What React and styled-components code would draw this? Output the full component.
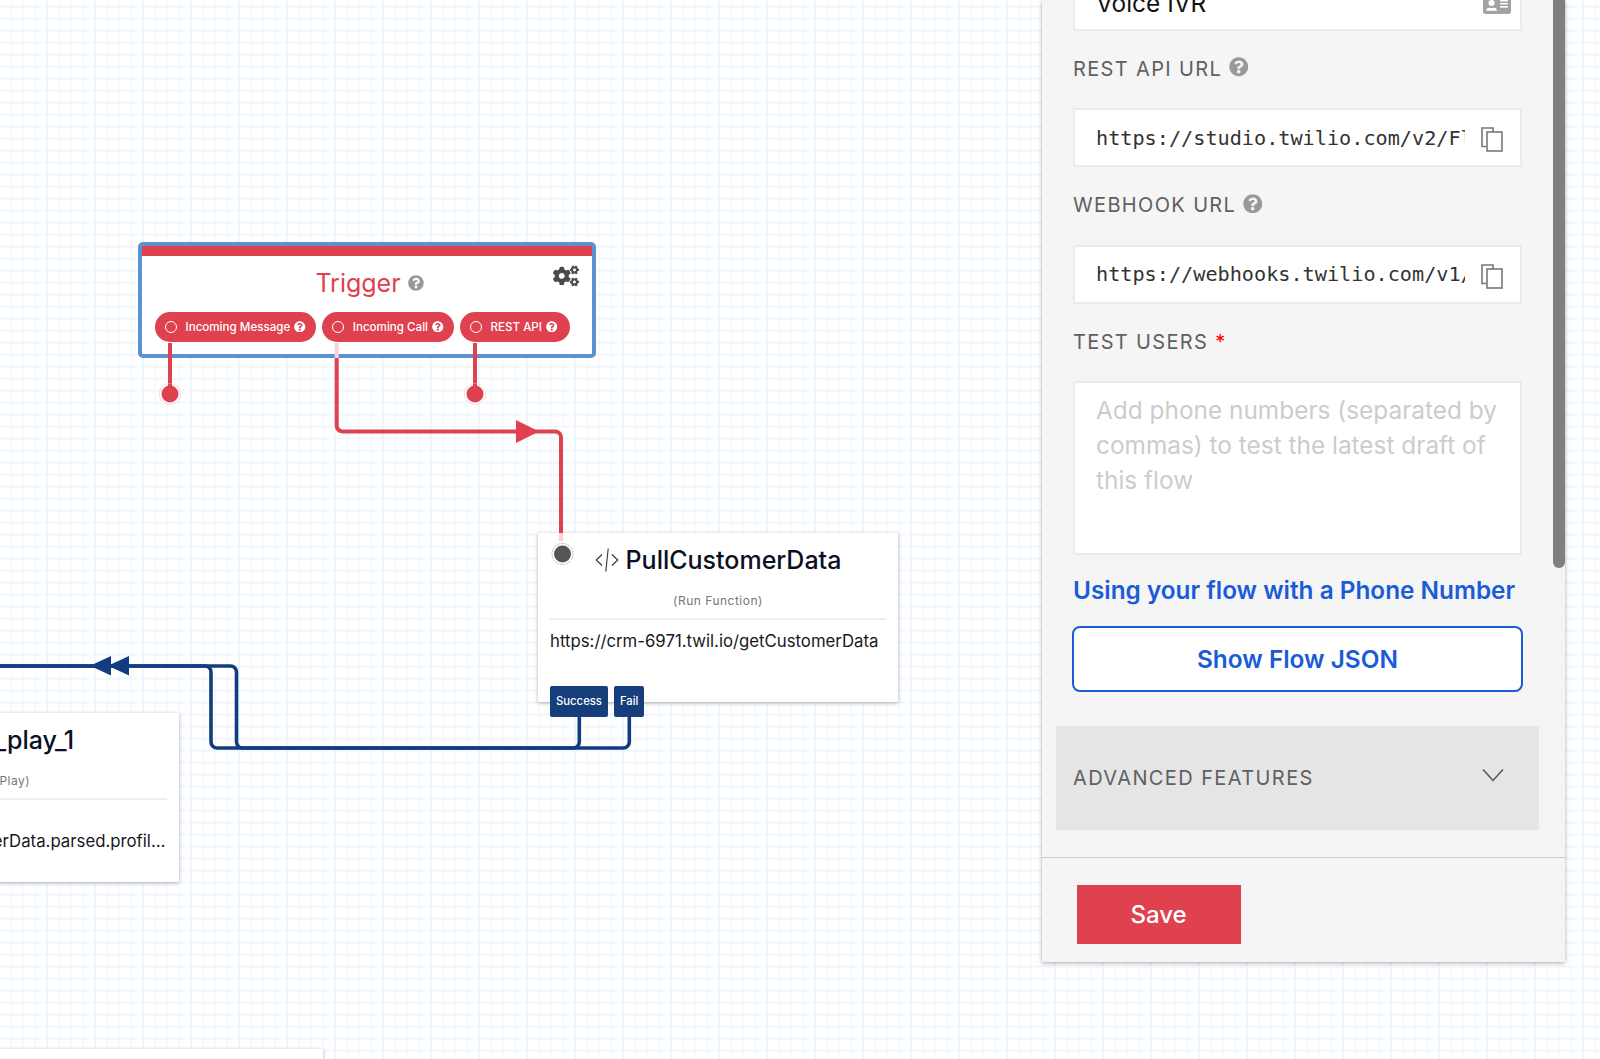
import styled, { createGlobalStyle } from "styled-components";
import { FaCogs, FaQuestionCircle, FaIdCard } from "react-icons/fa";

const Global = createGlobalStyle`
  html, body {
    margin: 0;
    padding: 0;
    overflow: hidden;
  }
  body {
    font-family: Inter, "Liberation Sans", sans-serif;
    background: #fff;
  }
`;

const RED = "#df414e";
const NAVY = "#133c80";
const BLUE = "#1a5cd6";

// canvas
const Canvas = styled.div`
  position: relative;
  width: 1600px;
  height: 1059px;
  overflow: hidden;
  background-color: #fff;
  background-image:
    linear-gradient(to right, #e6f0fd 1.5px, transparent 1.5px),
    linear-gradient(to right, #eef5fe 1.5px, transparent 1.5px),
    linear-gradient(to bottom, #f0f6fe 2px, transparent 2px);
  background-size: 48px 100%, 12px 100%, 100% 12px;
  background-position: 46.5px 0, 10.5px 0, 0 5.5px;
`;

const Wires = styled.svg`
  position: absolute;
  inset: 0;
  z-index: 3;
  pointer-events: none;
`;

// trigger node
const TriggerBox = styled.div`
  position: absolute;
  left: 138px;
  top: 242px;
  width: 458px;
  height: 116px;
  box-sizing: border-box;
  border: 4px solid #5b93cf;
  border-radius: 5px;
  background: #fff;
  z-index: 1;
`;

const TriggerBar = styled.div`
  height: 9.5px;
  background: ${RED};
`;

const TriggerHead = styled.div`
  position: relative;
  display: flex;
  align-items: center;
  justify-content: center;
  gap: 7px;
  height: 55px;
  padding-left: 5px;
`;

const TriggerTitle = styled.span`
  font-size: 25px;
  line-height: 32px;
  color: ${RED};
`;

const Gears = styled(FaCogs)`
  position: absolute;
  right: 13px;
  top: 7px;
  width: 26px;
  height: 26px;
  color: #4a4a4a;
`;

const Chips = styled.div`
  display: flex;
  gap: 6.5px;
  margin-top: 1px;
  padding-left: 13px;
`;

const Chip = styled.div`
  display: flex;
  align-items: center;
  height: 30px;
  box-sizing: border-box;
  padding: 0 ${(props) => props.$right || 10}px 0 10px;
  border-radius: 15px;
  background: ${RED};
  color: #fff;
  font-size: 11.6px;
  font-weight: 500;
`;

const ChipRing = styled.span`
  width: 10px;
  height: 10px;
  border: 1.5px solid #fff;
  border-radius: 50%;
  margin-right: 8.5px;
`;

const ChipHelp = styled(FaQuestionCircle)`
  width: 11.5px;
  height: 11.5px;
  margin-left: 4px;
`;

const HelpGrey = styled(FaQuestionCircle)`
  width: ${(props) => props.$size}px;
  height: ${(props) => props.$size}px;
  color: #999;
`;

// widget cards
const Card = styled.div`
  position: absolute;
  left: ${(props) => props.$x}px;
  top: ${(props) => props.$y}px;
  width: 360px;
  height: 168.5px;
  box-sizing: border-box;
  padding: 9px 12px 0;
  background: #fff;
  box-shadow: 0 1px 4px rgba(0, 0, 0, 0.3);
  z-index: 1;
`;

const CardHead = styled.div`
  display: flex;
  align-items: center;
  justify-content: center;
  gap: 7px;
  height: 36px;
`;

const CardTitle = styled.span`
  font-size: 25px;
  font-weight: 500;
  line-height: 36px;
  color: #0b0f24;
  white-space: nowrap;
`;

const CardSub = styled.div`
  margin-top: 15px;
  text-align: center;
  font-size: 12px;
  line-height: 16px;
  letter-spacing: 0.5px;
  color: #777;
`;

const CardRule = styled.div`
  margin-top: 9px;
  height: 1.5px;
  background: #eee;
`;

const CardBody = styled.div`
  margin-top: ${(props) => props.$gap}px;
  font-size: 16.75px;
  line-height: 24px;
  color: #16181d;
  white-space: nowrap;
  overflow: hidden;
  text-overflow: ellipsis;
`;

const Outlets = styled.div`
  position: absolute;
  left: 12px;
  top: 152.5px;
  display: flex;
  gap: 6px;
`;

const Outlet = styled.div`
  display: flex;
  align-items: center;
  height: 31px;
  padding: 0 6px;
  border-radius: 2px;
  background: #163e7b;
  color: #fff;
  font-size: 11.3px;
  font-weight: 500;
`;

const BottomCard = styled.div`
  position: absolute;
  left: -40px;
  top: 1049px;
  width: 362.5px;
  height: 60px;
  background: #fff;
  box-shadow: 0 1px 4px rgba(0, 0, 0, 0.3);
`;

// side panel
const Panel = styled.aside`
  position: absolute;
  left: 1041.5px;
  top: 0;
  width: 523.5px;
  height: 962px;
  display: flex;
  flex-direction: column;
  background: #f5f5f5;
  box-shadow: 0 1px 4px rgba(0, 0, 0, 0.35);
  z-index: 4;
`;

const PanelBody = styled.div`
  position: relative;
  flex: 1;
  overflow: hidden;
  padding-top: 0.1px;
`;

const Thumb = styled.div`
  position: absolute;
  right: 0;
  top: 0;
  width: 12px;
  height: 568px;
  border-radius: 0 0 6px 6px;
  background: #7f7f7f;
`;

const Field = styled.div`
  position: relative;
  box-sizing: border-box;
  margin-left: 31.5px;
  width: 448.5px;
  height: 59px;
  display: flex;
  align-items: center;
  padding-left: 21px;
  background: #fff;
  border: 2px solid #ebebeb;
`;

const VoiceField = styled(Field)`
  margin-top: -28.3px;
  padding-top: 3px;
  font-size: 24.4px;
  color: #111;
`;

const VoiceIcon = styled(FaIdCard)`
  position: absolute;
  right: 9px;
  top: 15px;
  width: 28px;
  height: 28px;
  color: #a3a3a3;
`;

const UrlInput = styled.input`
  width: 369px;
  padding: 0;
  border: none;
  outline: none;
  background: transparent;
  font-family: "DejaVu Sans Mono", monospace;
  font-size: 20.2px;
  color: #333;
`;

const CopyIcon = styled.svg`
  position: absolute;
  right: 17px;
  top: 17px;
`;

const Label = styled.div`
  display: flex;
  align-items: flex-end;
  gap: 7px;
  margin: 26px 0 27.5px 31.5px;
  height: 24px;
  font-size: 20px;
  line-height: 24px;
  letter-spacing: 1.35px;
  color: #606060;
`;

const LabelHelp = styled(HelpGrey)`
  position: relative;
  top: -4px;
`;

const Required = styled.span`
  color: #f00;
`;

const UsersInput = styled.textarea`
  display: block;
  box-sizing: border-box;
  margin-left: 31.5px;
  width: 448.5px;
  height: 174px;
  padding: 10px 21px;
  resize: none;
  outline: none;
  background: #fff;
  border: 2px solid #ebebeb;
  font-family: Inter, sans-serif;
  font-size: 24.4px;
  line-height: 35px;

  &::placeholder {
    color: #ccc;
    opacity: 1;
  }
`;

const FlowLink = styled.a`
  display: block;
  margin: 18px 0 0 31.5px;
  font-size: 24.35px;
  line-height: 34px;
  font-weight: 600;
  color: ${BLUE};
  white-space: nowrap;
`;

const JsonButton = styled.button`
  display: block;
  box-sizing: border-box;
  margin: 19px 0 0 30.5px;
  width: 451px;
  height: 65.5px;
  background: #fff;
  border: 2px solid ${BLUE};
  border-radius: 8px;
  font-family: Inter, sans-serif;
  font-size: 24.4px;
  font-weight: 600;
  color: ${BLUE};
`;

const Advanced = styled.div`
  position: relative;
  box-sizing: border-box;
  display: flex;
  align-items: center;
  margin: 34px 0 0 14.5px;
  width: 483px;
  height: 104px;
  padding-left: 17px;
  background: #e5e5e5;
  font-size: 20px;
  letter-spacing: 1.4px;
  color: #606060;
`;

const Chevron = styled.svg`
  position: absolute;
  left: 426px;
  top: 42px;
`;

const PanelFoot = styled.div`
  box-sizing: border-box;
  height: 105px;
  padding: 26.5px 0 0 35px;
  border-top: 1.5px solid #ccc;
`;

const SaveButton = styled.button`
  display: block;
  width: 164px;
  height: 59.5px;
  border: none;
  background: ${RED};
  color: #fff;
  font-family: Inter, sans-serif;
  font-size: 24px;
  font-weight: 500;
`;

const CodeGlyph = () => (
  <svg width="24" height="24" viewBox="0 0 24 24" fill="none" stroke="#333" strokeWidth="1.1">
    <path d="M7 6.5 1.2 12 7 17.5" />
    <path d="M17 6.5 22.8 12 17 17.5" />
    <path d="M13.2 0.5 10.8 23.5" />
  </svg>
);

const CopyGlyph = () => (
  <CopyIcon width="22" height="25" viewBox="0 0 22 25" fill="none" stroke="#777" strokeWidth="1.6">
    <path d="M5 19.5H1V1h11v4" />
    <rect x="6" y="5" width="15" height="19" fill="#fff" />
  </CopyIcon>
);

const Arrow = ({ d, fill }) => <path d={d} fill={fill} />;

const App = () => {
  return (
    <Canvas>
      <Global />

      <TriggerBox>
        <TriggerBar />
        <TriggerHead>
          <TriggerTitle>Trigger</TriggerTitle>
          <HelpGrey $size={16} />
          <Gears />
        </TriggerHead>
        <Chips>
          <Chip>
            <ChipRing />
            Incoming Message
            <ChipHelp />
          </Chip>
          <Chip>
            <ChipRing />
            Incoming Call
            <ChipHelp />
          </Chip>
          <Chip $right={13}>
            <ChipRing />
            REST API
            <ChipHelp />
          </Chip>
        </Chips>
      </TriggerBox>

      <Card $x={538} $y={533}>
        <CardHead>
          <CodeGlyph />
          <CardTitle>PullCustomerData</CardTitle>
        </CardHead>
        <CardSub>(Run Function)</CardSub>
        <CardRule />
        <CardBody $gap={9}>https://crm-6971.twil.io/getCustomerData</CardBody>
        <Outlets>
          <Outlet>Success</Outlet>
          <Outlet>Fail</Outlet>
        </Outlets>
      </Card>

      <Card $x={-181} $y={713}>
        <CardHead>
          <CodeGlyph />
          <CardTitle>say_play_1</CardTitle>
        </CardHead>
        <CardSub>(Say/Play)</CardSub>
        <CardRule />
        <CardBody $gap={29}>'widgets.PullCustomerData.parsed.profile.first_name'</CardBody>
      </Card>

      <BottomCard />

      <Wires width="1600" height="1059" viewBox="0 0 1600 1059" fill="none">
        <g stroke={RED} strokeWidth="4">
          <path d="M170 343V394" />
          <path d="M475 343V394" />
          <path d="M336.7 358V425.5a6 6 0 0 0 6 6H555a6 6 0 0 1 6 6V533" />
        </g>
        <path d="M336.7 343V358" stroke="#f7d3d6" strokeWidth="4" />
        <path d="M561 533V541" stroke="#f7d3d6" strokeWidth="4" />
        <Arrow d="M516 420 539 431.5 516 443Z" fill={RED} />
        <circle cx="170" cy="394" r="8.5" fill={RED} />
        <circle cx="170" cy="394" r="10.5" stroke="#f3b6bb" strokeWidth="0.8" strokeDasharray="1.5 1" />
        <circle cx="475" cy="394" r="8.5" fill={RED} />
        <circle cx="475" cy="394" r="10.5" stroke="#f3b6bb" strokeWidth="0.8" strokeDasharray="1.5 1" />
        <circle cx="562.5" cy="554" r="8.5" fill="#555" />
        <circle cx="562.5" cy="554" r="10.5" stroke="#999" strokeWidth="0.8" strokeDasharray="1.5 1" />

        <g stroke={NAVY} strokeWidth="3.6">
          <path d="M579.3 717V742a6 6 0 0 1-6 6H242.5a6 6 0 0 1-6-6V672a6 6 0 0 0-6-6H0" />
          <path d="M629.3 717V742a6 6 0 0 1-6 6H217a6 6 0 0 1-6-6V672a6 6 0 0 0-6-6H0" />
        </g>
        <Arrow d="M90 665.7 111 656V675.5Z" fill={NAVY} />
        <Arrow d="M108 665.7 129 656V675.5Z" fill={NAVY} />
      </Wires>

      <Panel>
        <PanelBody>
          <VoiceField>
            Voice IVR
            <VoiceIcon />
          </VoiceField>

          <Label>
            REST API URL
            <LabelHelp $size={19.5} />
          </Label>
          <Field>
            <UrlInput readOnly value="https://studio.twilio.com/v2/Flows/FW0c5a1e/Executions" />
            <CopyGlyph />
          </Field>

          <Label>
            WEBHOOK URL
            <LabelHelp $size={19.5} />
          </Label>
          <Field>
            <UrlInput readOnly value="https://webhooks.twilio.com/v1/Accounts/AC0f3e/Flows" />
            <CopyGlyph />
          </Field>

          <Label>
            TEST USERS <Required>*</Required>
          </Label>
          <UsersInput placeholder="Add phone numbers (separated by commas) to test the latest draft of this flow" />

          <FlowLink>Using your flow with a Phone Number</FlowLink>
          <JsonButton>Show Flow JSON</JsonButton>

          <Advanced>
            ADVANCED FEATURES
            <Chevron width="22" height="14" viewBox="0 0 22 14" fill="none" stroke="#555" strokeWidth="1.5">
              <path d="M1 1.5 11 12.5 21 1.5" />
            </Chevron>
          </Advanced>

          <Thumb />
        </PanelBody>
        <PanelFoot>
          <SaveButton>Save</SaveButton>
        </PanelFoot>
      </Panel>
    </Canvas>
  );
};

export default App;
